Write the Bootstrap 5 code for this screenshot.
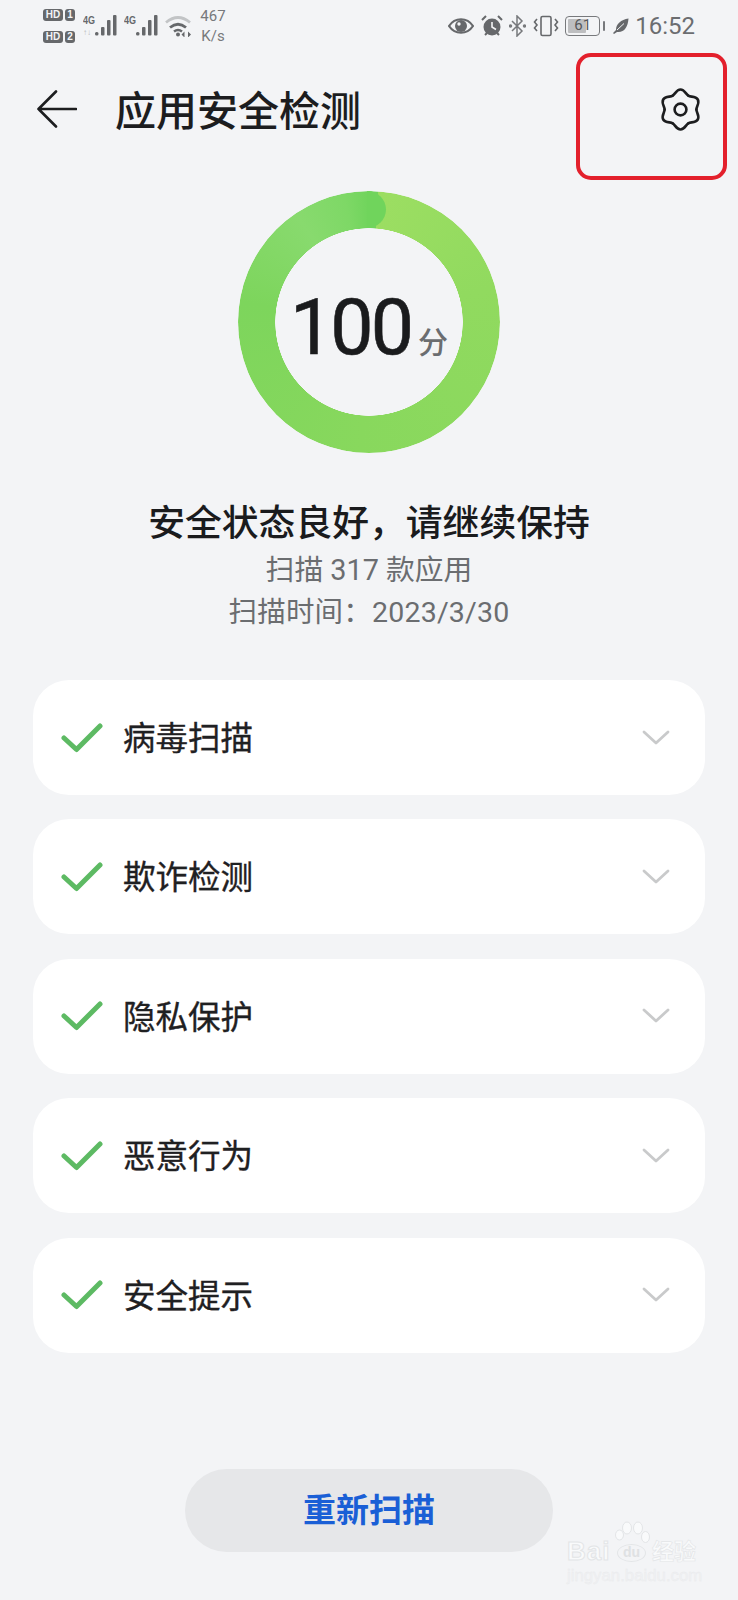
<!DOCTYPE html>
<html lang="zh-CN">
<head>
<meta charset="utf-8">
<title>应用安全检测</title>
<link href="https://cdn.jsdelivr.net/npm/bootstrap@5.3.0/dist/css/bootstrap.min.css" rel="stylesheet">
<style>
html,body{height:1600px;overflow:hidden}
body{background:#f3f4f6;font-family:Roboto,"Noto Sans CJK SC",sans-serif;color:#1a1b1d}
.phone{position:relative;width:738px;height:1600px;overflow:hidden}
.sbar{height:56px;padding:0 43px 4px 43px;color:#66686b}
.hd-col{display:flex;flex-direction:column;gap:10px;width:33px}
.hd-tag{display:flex;align-items:center;gap:2px;height:12px}
.hd-a{background:#66686b;color:#f3f4f6;font:700 10px/12px "Liberation Sans",sans-serif;border-radius:3px;width:20px;text-align:center}
.hd-b{background:#66686b;color:#f3f4f6;font:700 10px/12px "Liberation Sans",sans-serif;border-radius:3px;width:10px;text-align:center}
.gap-sig{margin-left:7px}
.speed{font-size:15px;line-height:20px;text-align:center;width:30px;color:#77797c;margin-left:7px}
.icons-r{gap:6.500px}
.batt-wrap{gap:3px}
.batt{position:relative;width:35px;height:20px;border:1.500px solid #77797c;border-radius:4px;padding:2px;display:flex}
.batt-fill{width:61%;background:#bdbec0;border-radius:1px}
.batt-num{position:absolute;inset:0;text-align:center;font-size:15px;line-height:17px;color:#55575a}
.clock{font-size:24px;line-height:28px;color:#6b6d70}
.appbar{height:106px;padding:0 35px 0 37px}
.app-title{font-size:41px;line-height:48px;font-weight:500;margin:0 0 0 38px;padding-top:6px;color:#1c1d1f}
.redbox{position:absolute;left:576px;top:53px;width:151px;height:127px;border:4px solid #e3202c;border-radius:15px}
.ring{width:262px;height:262px;margin:0 auto;border-radius:50%;
 background:conic-gradient(from 4deg,#9cde62 0deg,#91da5f 70deg,#88d85d 180deg,#7dd55c 275deg,#88da6e 322deg,#7ed866 345deg,#70d45c 356deg);
 -webkit-mask:radial-gradient(circle,transparent 93.500px,#000 94px);mask:radial-gradient(circle,transparent 93.500px,#000 94px)}
.ring-wrap{position:relative;height:262px;margin-top:29px}
.ring-cap{position:absolute;left:349px;top:0;width:37px;height:37px;border-radius:50%;background:linear-gradient(90deg,transparent 50%,#70d45c 50%)}
.ring-txt{position:absolute;inset:0;padding-top:12px}
.score{font-family:Roboto,sans-serif;font-size:77px;line-height:1;letter-spacing:-3px;color:#1a1b1d;font-weight:400;-webkit-text-stroke:.6px #1a1b1d}
.unit{font-size:30px;line-height:1;font-weight:500;color:#6b6d70;margin-left:7px;margin-bottom:9px}
.state{font-size:36.800px;line-height:46px;font-weight:500;margin:48px 0 0;color:#1a1b1d}
.sub1{font-size:28.800px;line-height:36px;color:#6b6d70;margin-top:5px}
.sub2{font-size:28.500px;line-height:36px;color:#6b6d70;margin-top:7px;letter-spacing:.2px}
.items{margin:49px 33px 0;gap:24.400px}
.itm{height:115px;background:#fff;border-radius:36px;padding:0 35px 0 28px}
.itm-name{font-size:32.500px;line-height:40px;color:#1f2022;margin-left:20px;padding-top:3px;font-weight:400;-webkit-text-stroke:.35px #1f2022}
.rescan{display:block;width:368px;height:83px;margin:116px auto 0;background:#e6e7e9;border:0;border-radius:42px;color:#1a5fd6;font-size:33px;font-weight:700;line-height:83px;padding:0}
.rescan:hover,.rescan:active{background:#e6e7e9;color:#1a5fd6}
.wmark{position:absolute;left:567px;top:1520px;width:132px;height:66px;color:#f9fafb;pointer-events:none}
.wm-bai{position:absolute;left:0;top:15px;font:700 26px/32px "Liberation Sans",sans-serif;letter-spacing:1px;-webkit-text-stroke:1px #e3e5e7}
.wm-du{position:absolute;left:50px;top:24px;width:29px;height:18px;border:1.500px solid #e3e5e7;border-radius:50%;color:#dfe1e3;font:700 14px/14px "Liberation Sans",sans-serif;text-align:center}
.wm-cn{position:absolute;left:85px;top:20px;font-size:22px;line-height:24px;font-weight:700;white-space:nowrap;-webkit-text-stroke:.6px #e3e5e7}
.wm-url{position:absolute;left:0;top:46px;font:400 16.800px/20px "Liberation Sans",sans-serif;color:#f0f1f3;white-space:nowrap;-webkit-text-stroke:.3px #e8e9eb}
.wm-paw{position:absolute;left:48px;top:0}
</style>
</head>
<body>
<div class="phone">
  <div class="sbar d-flex align-items-center justify-content-between">
    <div class="d-flex align-items-center">
      <div class="hd-col">
        <div class="hd-tag"><span class="hd-a">HD</span><span class="hd-b">1</span></div>
        <div class="hd-tag"><span class="hd-a">HD</span><span class="hd-b">2</span></div>
      </div>
      <svg class="gap-sig" width="34" height="22" viewBox="0 0 34 22" fill="#66686b"><text x="0" y="9" font-family="Liberation Sans" font-weight="700" font-size="11" textLength="12" lengthAdjust="spacingAndGlyphs">4G</text><text x="0" y="20" font-family="Liberation Sans" font-size="8" fill="#b8babc">↑↓</text><rect x="12" y="17" width="3.500" height="3.500" rx="1.500"/><rect x="18" y="12" width="3.500" height="8.500" rx="1"/><rect x="24" y="5" width="3.500" height="15.500" rx="1"/><rect x="30" y="0" width="3.500" height="20.500" rx="1"/></svg>
      <svg class="gap-sig" width="34" height="22" viewBox="0 0 34 22" fill="#66686b"><text x="0" y="9" font-family="Liberation Sans" font-weight="700" font-size="11" textLength="12" lengthAdjust="spacingAndGlyphs">4G</text><rect x="12" y="17" width="3.500" height="3.500" rx="1.500"/><rect x="18" y="12" width="3.500" height="8.500" rx="1"/><rect x="24" y="5" width="3.500" height="15.500" rx="1"/><rect x="30" y="0" width="3.500" height="20.500" rx="1"/></svg>
      <svg class="gap-sig" width="26" height="22" viewBox="0 0 26 22" fill="none"><path d="M1 7.500Q13 -2.500 25 7.500" stroke="#c2c4c6" stroke-width="2.800"/><path d="M5 12.500Q13 6 21 12.500" stroke="#66686b" stroke-width="2.800"/><path d="M9 16.500Q13 13.500 17 16.500" stroke="#66686b" stroke-width="2.500"/><circle cx="13" cy="19.500" r="2" fill="#66686b"/><path d="M16.500 19.500l3-3v6zM26 19.500l-3-3v6z" fill="#66686b"/></svg>
      <div class="speed">467<br>K/s</div>
    </div>
    <div class="d-flex align-items-center icons-r">
      <svg width="26" height="18" viewBox="0 0 26 18"><path d="M1 9C7 0 19 0 25 9C19 18 7 18 1 9Z" fill="none" stroke="#66686b" stroke-width="2.200"/><circle cx="13" cy="9" r="6" fill="#66686b"/><circle cx="11" cy="7" r="1.700" fill="#f3f4f6"/></svg>
      <svg width="22" height="22" viewBox="0 0 22 22"><circle cx="11" cy="12" r="8.500" fill="#66686b"/><path d="M11 7v5l4 2.500" fill="none" stroke="#f3f4f6" stroke-width="1.600"/><path d="M1 5l4-4M21 5l-4-4M4 20l2-2M18 20l-2-2" stroke="#66686b" stroke-width="2"/></svg>
      <svg width="17" height="22" viewBox="0 0 17 22" fill="none" stroke="#77797c" stroke-width="1.500"><path d="M3 6l10 10-5 5V1l5 5L3 16"/><circle cx="1.500" cy="11" r="1" fill="#77797c"/><circle cx="15.500" cy="11" r="1" fill="#77797c"/></svg>
      <svg width="26" height="22" viewBox="0 0 26 22" fill="none" stroke="#66686b" stroke-width="1.600"><rect x="8" y="1.500" width="10" height="19" rx="1.500"/><path d="M4 4L1.500 7 4 10 1.500 13 4 16M22 4l2.500 3L22 10l2.500 3L22 16"/></svg>
      <div class="d-flex align-items-center batt-wrap"><div class="batt"><div class="batt-fill"></div><div class="batt-num">61</div></div><svg width="3" height="10" viewBox="0 0 3 10"><rect width="2" height="10" rx="1" fill="#77797c"/></svg></div>
      <svg width="16" height="16" viewBox="0 0 16 16"><path d="M15.500 .5C15 9 11 15 4 14L1 16 0 15 3 12C3 6 8 1.500 15.500 .5Z" fill="#66686b"/><path d="M4 12L11 5.500" stroke="#f3f4f6" stroke-width="1"/></svg>
      <span class="clock">16:52</span>
    </div>
  </div>

  <div class="appbar d-flex align-items-center">
    <svg width="40" height="38" viewBox="0 0 40 38" fill="none" stroke="#1c1d1f" stroke-width="2.600" stroke-linecap="round" stroke-linejoin="round" aria-label="back"><path d="M19 1.500L1.500 19 19 36.500M1.500 19H39"/></svg>
    <h1 class="app-title">应用安全检测</h1>
    <svg class="ms-auto" width="45" height="45" viewBox="0 0 48 48" fill="none" stroke="#1c1d1f" stroke-width="2.800" stroke-linecap="round" aria-label="settings">
      <path d="M15.500 9.280C17.800 8.500 19.500 2.700 24 2.700C28.500 2.700 30.200 8.500 32.500 9.280"/>
      <path transform="rotate(60 24 24)" d="M15.500 9.280C17.800 8.500 19.500 2.700 24 2.700C28.500 2.700 30.200 8.500 32.500 9.280"/>
      <path transform="rotate(120 24 24)" d="M15.500 9.280C17.800 8.500 19.500 2.700 24 2.700C28.500 2.700 30.200 8.500 32.500 9.280"/>
      <path transform="rotate(180 24 24)" d="M15.500 9.280C17.800 8.500 19.500 2.700 24 2.700C28.500 2.700 30.200 8.500 32.500 9.280"/>
      <path transform="rotate(240 24 24)" d="M15.500 9.280C17.800 8.500 19.500 2.700 24 2.700C28.500 2.700 30.200 8.500 32.500 9.280"/>
      <path transform="rotate(300 24 24)" d="M15.500 9.280C17.800 8.500 19.500 2.700 24 2.700C28.500 2.700 30.200 8.500 32.500 9.280"/>
      <circle cx="24" cy="24" r="6.300"/>
    </svg>
  </div>
  <div class="redbox"></div>

  <div class="ring-wrap">
    <div class="ring"></div>
    <div class="ring-cap"></div>
    <div class="ring-txt d-flex align-items-center justify-content-center">
      <div class="d-flex align-items-end">
        <span class="score">100</span><span class="unit">分</span>
      </div>
    </div>
  </div>

  <div class="text-center">
    <h2 class="state">安全状态良好，请继续保持</h2>
    <div class="sub1">扫描 317 款应用</div>
    <div class="sub2">扫描时间：2023/3/30</div>
  </div>

  <div class="items d-flex flex-column">
    <div class="itm d-flex align-items-center">
      <svg width="42" height="30" viewBox="0 0 42 30" fill="none" stroke="#5dba63" stroke-width="5" stroke-linecap="round" stroke-linejoin="round"><path d="M3 15L15.500 26.500 39 3"/></svg>
      <span class="itm-name">病毒扫描</span>
      <svg class="ms-auto" width="28" height="16" viewBox="0 0 28 16" fill="none" stroke="#c9cacb" stroke-width="2.800" stroke-linecap="round" stroke-linejoin="round"><path d="M2 2L14 13 26 2"/></svg>
    </div>
    <div class="itm d-flex align-items-center">
      <svg width="42" height="30" viewBox="0 0 42 30" fill="none" stroke="#5dba63" stroke-width="5" stroke-linecap="round" stroke-linejoin="round"><path d="M3 15L15.500 26.500 39 3"/></svg>
      <span class="itm-name">欺诈检测</span>
      <svg class="ms-auto" width="28" height="16" viewBox="0 0 28 16" fill="none" stroke="#c9cacb" stroke-width="2.800" stroke-linecap="round" stroke-linejoin="round"><path d="M2 2L14 13 26 2"/></svg>
    </div>
    <div class="itm d-flex align-items-center">
      <svg width="42" height="30" viewBox="0 0 42 30" fill="none" stroke="#5dba63" stroke-width="5" stroke-linecap="round" stroke-linejoin="round"><path d="M3 15L15.500 26.500 39 3"/></svg>
      <span class="itm-name">隐私保护</span>
      <svg class="ms-auto" width="28" height="16" viewBox="0 0 28 16" fill="none" stroke="#c9cacb" stroke-width="2.800" stroke-linecap="round" stroke-linejoin="round"><path d="M2 2L14 13 26 2"/></svg>
    </div>
    <div class="itm d-flex align-items-center">
      <svg width="42" height="30" viewBox="0 0 42 30" fill="none" stroke="#5dba63" stroke-width="5" stroke-linecap="round" stroke-linejoin="round"><path d="M3 15L15.500 26.500 39 3"/></svg>
      <span class="itm-name">恶意行为</span>
      <svg class="ms-auto" width="28" height="16" viewBox="0 0 28 16" fill="none" stroke="#c9cacb" stroke-width="2.800" stroke-linecap="round" stroke-linejoin="round"><path d="M2 2L14 13 26 2"/></svg>
    </div>
    <div class="itm d-flex align-items-center">
      <svg width="42" height="30" viewBox="0 0 42 30" fill="none" stroke="#5dba63" stroke-width="5" stroke-linecap="round" stroke-linejoin="round"><path d="M3 15L15.500 26.500 39 3"/></svg>
      <span class="itm-name">安全提示</span>
      <svg class="ms-auto" width="28" height="16" viewBox="0 0 28 16" fill="none" stroke="#c9cacb" stroke-width="2.800" stroke-linecap="round" stroke-linejoin="round"><path d="M2 2L14 13 26 2"/></svg>
    </div>
  </div>

  <button type="button" class="btn rescan">重新扫描</button>

  <div class="wmark">
    <svg class="wm-paw" width="36" height="26" viewBox="0 0 36 26" fill="#f9fafb" stroke="#e3e5e7" stroke-width="1"><ellipse cx="4.500" cy="15" rx="4" ry="5"/><ellipse cx="12" cy="8" rx="4.500" ry="6"/><ellipse cx="23" cy="8" rx="4.500" ry="6"/><ellipse cx="30.500" cy="17" rx="4" ry="5.500"/></svg>
    <div class="wm-bai">Bai</div>
    <div class="wm-du">du</div>
    <div class="wm-cn">经验</div>
    <div class="wm-url">jingyan.baidu.com</div>
  </div>
</div>
<script src="https://cdn.jsdelivr.net/npm/bootstrap@5.3.0/dist/js/bootstrap.bundle.min.js"></script>
</body>
</html>
